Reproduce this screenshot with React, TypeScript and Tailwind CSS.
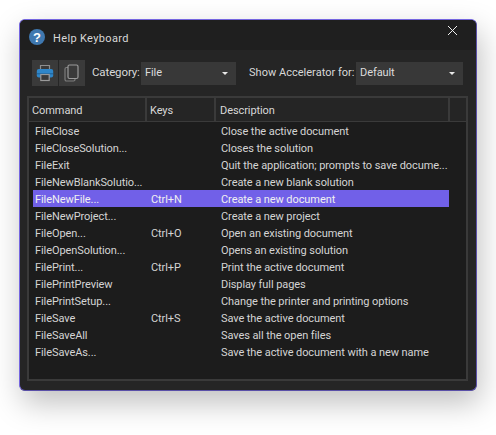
const rows: [string, string, string][] = [
  ["FileClose", "", "Close the active document"],
  ["FileCloseSolution...", "", "Closes the solution"],
  ["FileExit", "", "Quit the application; prompts to save docume..."],
  ["FileNewBlankSolutio...", "", "Create a new blank solution"],
  ["FileNewFile...", "Ctrl+N", "Create a new document"],
  ["FileNewProject...", "", "Create a new project"],
  ["FileOpen...", "Ctrl+O", "Open an existing document"],
  ["FileOpenSolution...", "", "Opens an existing solution"],
  ["FilePrint...", "Ctrl+P", "Print the active document"],
  ["FilePrintPreview", "", "Display full pages"],
  ["FilePrintSetup...", "", "Change the printer and printing options"],
  ["FileSave", "Ctrl+S", "Save the active document"],
  ["FileSaveAll", "", "Saves all the open files"],
  ["FileSaveAs...", "", "Save the active document with a new name"],
];

function Select({ label, width }: { label: string; width: string }) {
  return (
    <div className={`${width} shrink-0 h-[23px] bg-[#383838] flex items-center justify-between pl-[4px] pr-[8px] pt-[1px] text-[11px] tracking-[-0.08px] text-[#dcdcdc]`}>
      <span>{label}</span>
      <span className="w-0 h-0 border-l-[3px] border-r-[3px] border-t-[3px] border-l-transparent border-r-transparent border-t-[#e8e8e8]" />
    </div>
  );
}

export default function App() {
  return (
    <div
      className="w-[496px] h-[435px] bg-white pt-[19px] pl-[19px] overflow-hidden"
      style={{ fontFamily: 'Roboto, "Liberation Sans", Arial, sans-serif' }}
    >
      <div className="w-[458px] h-[372px] rounded-[6px] border border-[#5a50a8] border-t-[#7566e0] border-l-[#7566e0] bg-[#252525] shadow-[3px_12px_30px_rgba(0,0,0,0.25)] flex flex-col overflow-hidden">
        <div className="h-[30px] shrink-0 bg-[#1f1f1f] flex items-center pl-[9px] pt-[4px]">
          <svg width="16" height="16" viewBox="0 0 16 16">
            <circle cx="8" cy="8" r="8" fill="#3f78b0" />
            <text x="8" y="12.6" textAnchor="middle" fontSize="13" fontWeight="700" fill="#fff" fontFamily="Liberation Sans, sans-serif">?</text>
          </svg>
          <span className="ml-[8px] text-[11px] tracking-[0.35px] text-[#d8d8d8] mt-[4px]">Help Keyboard</span>
          <svg className="ml-auto mr-[18px] mb-[14px]" width="11" height="11" viewBox="0 0 11 11">
            <path d="M1 1 L10 10 M10 1 L1 10" stroke="#f0f0f0" strokeWidth="1" fill="none" />
          </svg>
        </div>

        <div className="flex items-center h-[46px] shrink-0 pl-[12px] whitespace-nowrap">
          <div className="flex gap-px shrink-0">
            <div className="w-[26px] h-[26px] bg-[#3a3a3a] flex items-center justify-center">
              <svg width="18" height="18" viewBox="0 0 18 18" fill="none">
                <path d="M4.5 6 V1.5 H13.5 V6" stroke="#8e8e8e" strokeWidth="1.2" />
                <rect x="0.8" y="5" width="16.4" height="8.5" rx="2" fill="#2f86c9" />
                <path d="M1 9.8 H17" stroke="#1c5f94" strokeWidth="1" />
                <rect x="4.8" y="10.5" width="8.4" height="6" fill="#3a3a3a" stroke="#9a9a9a" strokeWidth="1.2" />
              </svg>
            </div>
            <div className="w-[26px] h-[26px] bg-[#3a3a3a] flex items-center justify-center">
              <svg width="18" height="18" viewBox="0 0 18 18" fill="none">
                <rect x="2" y="3.5" width="10" height="13.5" rx="1.5" stroke="#7d7d7d" strokeWidth="1.2" fill="#3a3a3a" />
                <rect x="5" y="1" width="10" height="13.5" rx="1.5" stroke="#9a9a9a" strokeWidth="1.2" fill="#3a3a3a" />
              </svg>
            </div>
          </div>
          <span className="w-[49px] ml-[7px] text-[11.5px] tracking-[-0.12px] text-[#d8d8d8]">Category:</span>
          <Select label="File" width="w-[95px]" />
          <span className="w-[107px] ml-[13px] text-[11px] tracking-[0.02px] text-[#d8d8d8]">Show Accelerator for:</span>
          <Select label="Default" width="w-[107px]" />
        </div>

        <div className="ml-[7px] w-[441px] h-[285px] border-2 border-[#3a3a3a] bg-[#1c1c1c] text-[11px] tracking-[-0.08px] text-[#d4d4d4]">
          <div className="flex h-[24px] bg-[#252525] border-b border-[#3a3a3a] pl-[2px] text-[#d8d8d8]">
            <div className="w-[116px] shrink-0 flex items-center pl-[1px] pt-[3px] border-r-2 border-[#3a3a3a]">Command</div>
            <div className="w-[69px] shrink-0 flex items-center pl-[3px] pt-[3px] border-r-2 border-[#3a3a3a]">Keys</div>
            <div className="w-[234px] shrink-0 flex items-center pl-[4px] pt-[3px] border-r-2 border-[#3a3a3a]">Description</div>
          </div>
          <div className="pl-[4px]">
            {rows.map(([c, k, d]) => (
              <div
                key={c}
                className={`flex items-center h-[17px] w-[416px] pt-[3px] ${k === "Ctrl+N" ? "bg-[#7160e8] text-[#f0f0f0]" : ""}`}
              >
                <span className="w-[116px] shrink-0 pl-[2px] whitespace-nowrap">{c}</span>
                <span className="w-[70px] shrink-0 pl-[2px]">{k}</span>
                <span className="pl-[2px] whitespace-nowrap">{d}</span>
              </div>
            ))}
          </div>
        </div>
      </div>
    </div>
  );
}
